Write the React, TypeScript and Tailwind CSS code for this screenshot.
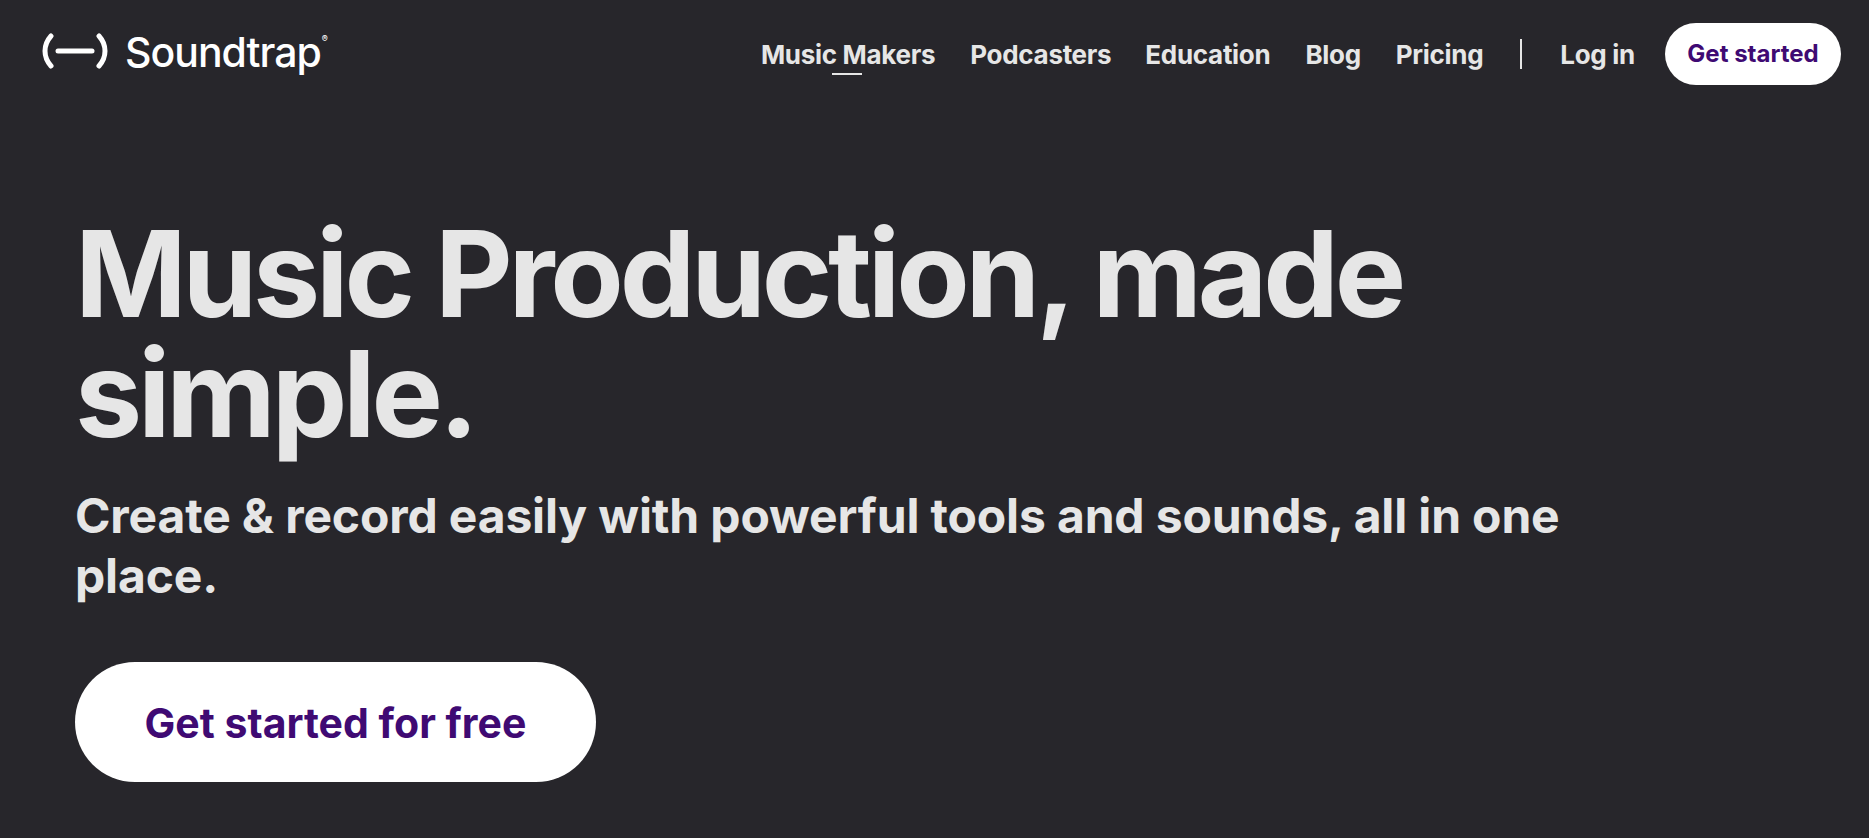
export default function App() {
  return (
    <div className="min-h-[838px] overflow-hidden bg-[#27262b] font-['Inter',sans-serif] text-[#e6e6e6]">
      <header className="flex h-[85px] items-start justify-between pl-[42px] pr-[28px] pt-[23px]">
        <div className="flex h-[56px] items-center gap-[17px]">
          <svg width="66" height="36" viewBox="0 0 66 36" fill="none" stroke="#fff" strokeWidth="5" strokeLinecap="round">
            <path d="M9 3C1 12 1 24 9 33" />
            <path d="M57 3C65 12 65 24 57 33" />
            <path d="M16 18H50" />
          </svg>
          <span className="relative pt-[2px] text-[41px] font-medium leading-none tracking-[-1px] text-white">
            Soundtrap
            <span className="absolute right-[-6px] top-[4px] text-[9px] leading-none">®</span>
          </span>
        </div>
        <nav className="flex items-center text-[26px] font-bold leading-[32px] tracking-[-0.3px] text-[#e6e6e6]">
          <a className="relative mr-[35px] pt-[2px]">
            Music Makers
            <span className="absolute bottom-[-4px] left-[71px] h-[2px] w-[30px] bg-[#e6e6e6]" />
          </a>
          <a className="mr-[34px] pt-[2px]">Podcasters</a>
          <a className="mr-[35px] pt-[2px]">Education</a>
          <a className="mr-[35px] pt-[2px]">Blog</a>
          <a className="pt-[2px]">Pricing</a>
          <span className="ml-[37px] mr-[38px] h-[30px] w-[2px] bg-[#e6e6e6]" />
          <a className="mr-[30px] pt-[2px]">Log in</a>
          <a className="flex h-[62px] w-[176px] items-center justify-center rounded-full bg-white text-[24px] tracking-normal text-[#3f0a73]">Get started</a>
        </nav>
      </header>
      <main className="pl-[75px] pr-[300px] pt-[129px]">
        <h1 className="text-[120px] font-bold leading-[120px] tracking-[-4.2px]">Music Production, made simple.</h1>
        <p className="mt-[32px] text-[48px] font-bold leading-[60px] tracking-[-0.15px]">Create &amp; record easily with powerful tools and sounds, all in one place.</p>
        <a className="mt-[56px] flex h-[120px] w-[521px] items-center justify-center rounded-full bg-white pt-[3px] text-[41px] font-bold text-[#3f0a73]">Get started for free</a>
      </main>
    </div>
  );
}
